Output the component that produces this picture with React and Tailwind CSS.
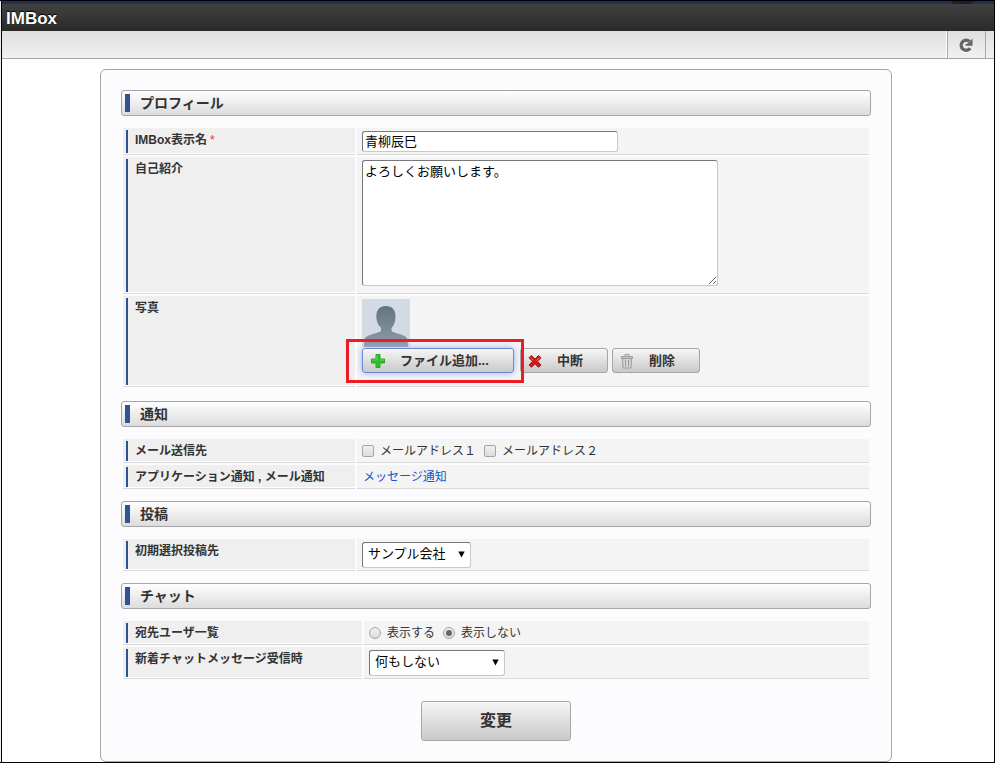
import React from 'react'

const Section = ({ title, className, children }) => (
  <section className={className}>
    <h2 className="flex items-center h-[26px] pl-[3px] border border-[#a6a6a6] rounded-[3px] bg-gradient-to-b from-white to-[#dcdcdc] text-sm font-bold text-[#333]">
      <span className="w-[5px] h-[18px] bg-[#2e5197] mr-2.5"></span>
      {title}
    </h2>
    <div className="mt-3 mx-0.5 flex flex-col gap-0.5">{children}</div>
  </section>
)

const Row = ({ label, htmlFor, required, wide, className, children }) => {
  const Tag = htmlFor ? 'label' : 'span'
  return (
    <div className={`grid gap-0.5 ${wide ? 'grid-cols-[239px_1fr]' : 'grid-cols-[232px_1fr]'} ${className}`}>
      <div className="bg-white border-b border-[#d9d9d9] pb-px flex">
        <div className="flex-1 flex bg-[#efefef] pl-[3px] pt-0.5">
          <Tag htmlFor={htmlFor} className="flex-1 border-l-2 border-[#2e5197] pl-[7px] leading-5 font-bold">
            {label}
            {required && <span className="text-[#f03030] font-normal ml-[3px]">*</span>}
          </Tag>
        </div>
      </div>
      <div className="bg-[#f4f4f4] border-b border-[#d9d9d9] pl-[5px] pt-[3px]">{children}</div>
    </div>
  )
}

const Select = ({ id, className, children }) => (
  <div className={`relative ${className}`}>
    <select id={id} className="appearance-none block w-full h-[26px] pl-[5px] pr-4 pb-0.5 bg-white text-[13px] text-black border border-[#c8c8c8] border-t-[#777] border-l-[#777] rounded-[3px]">
      {children}
    </select>
    <svg className="absolute right-[6px] top-[9px] pointer-events-none" width="7" height="7" viewBox="0 0 7 7">
      <path d="M0.3 0.5h6.4L3.5 6.5z" fill="#000" />
    </svg>
  </div>
)

const Check = ({ label }) => (
  <label className="flex items-center gap-1.5">
    <input type="checkbox" className="appearance-none w-3 h-3 border border-[#a5a5a5] rounded-[2px] bg-gradient-to-b from-[#f0f0f0] to-[#dcdcdc] checked:bg-[#2e5197]" />
    {label}
  </label>
)

const Radio = ({ label, checked }) => (
  <label className="flex items-center gap-1.5">
    <span className="relative flex w-3 h-3">
      <input type="radio" name="members" defaultChecked={checked} className="peer appearance-none w-3 h-3 border border-[#a5a5a5] rounded-full bg-gradient-to-b from-[#f0f0f0] to-[#dcdcdc]" />
      <span className="hidden peer-checked:block absolute inset-[3px] rounded-full bg-[#666] pointer-events-none"></span>
    </span>
    {label}
  </label>
)

const Avatar = () => (
  <svg className="block" width="48" height="48" viewBox="0 0 48 48">
    <defs>
      <linearGradient id="body" x1="0" y1="7" x2="0" y2="48" gradientUnits="userSpaceOnUse">
        <stop offset="0" stopColor="#61747f" />
        <stop offset="1" stopColor="#8f9da9" />
      </linearGradient>
    </defs>
    <rect width="48" height="48" fill="#d2dbe5" />
    <path d="M24 7C18 7 14.3 11 14.3 17.5c0 5 1.700 8.800 4.700 11.200v3.300c-1 1-3.500 1.700-7 2.700C6 36.300 3 37.500 2.500 41L2 48h44l-.5-7c-.5-3.500-3.500-4.700-9.500-6.300-3.500-1-5.500-1.700-6.500-2.700v-3.300c2.700-2.400 4-6.200 4-11.200C33.500 11 30 7 24 7z" fill="url(#body)" />
  </svg>
)

const PlusIcon = () => (
  <svg width="16" height="16" viewBox="0 0 16 16">
    <path d="M6 1.500h4V6h4.500v4H10v4.500H6V10H1.500V6H6z" fill="#2cbf2c" stroke="#28a52c" strokeLinejoin="round" />
    <path d="M7 2.500V7H2.500M10 7h4" fill="none" stroke="#5fdc5f" />
  </svg>
)

const CrossIcon = () => (
  <svg width="16" height="16" viewBox="0 0 16 16">
    <path d="M4.500 2.500L8 6l3.500-3.500 2.500 2.300L10.500 8.300 14 12l-2.500 2.300L8 10.800l-3.500 3.500L2 12l3.500-3.700L2 4.800z" fill="#c81e1e" stroke="#a81717" strokeLinejoin="round" />
    <path d="M3.500 4.500L6.500 7.500M12.500 4.500l-3 3" fill="none" stroke="#ee7272" />
  </svg>
)

const TrashIcon = () => (
  <svg width="16" height="16" viewBox="0 0 16 16" fill="none" stroke="#9a9a9e">
    <path d="M3.500 5.500h9l-.5 9.500H4z" fill="#d5d5d8" />
    <path d="M2.500 3.500h11v2h-11z" fill="#c9c9cd" />
    <path d="M6 3V1.500h4V3M6.500 7v6.500M9.500 7v6.500" />
  </svg>
)

const buttonBase = 'flex items-center h-[25px] border rounded-[3px] bg-gradient-to-b from-[#f6f6f6] to-[#c9c9c9] text-[13px] font-bold text-[#333]'

const App = () => {
  return (
    <div className="border-y border-r border-black pl-px bg-[#eee] font-['Liberation_Sans','Noto_Sans_CJK_JP',sans-serif] text-xs text-[#333]">
      <div className="border-l border-black bg-white">
        <header>
          <div className="relative h-[3px] bg-[#232f55] overflow-hidden">
            <span className="absolute right-5 -top-2 w-6 h-[11px] rounded-full bg-[#1c1f26]"></span>
          </div>
          <div className="h-[27px] flex items-center pl-1 pt-0.5 bg-gradient-to-b from-[#414141] to-[#2a2a2a]">
            <h1 className="text-[17px] leading-6 font-bold text-white [text-shadow:0_-1px_1px_#000]">IMBox</h1>
          </div>
          <div className="h-7 flex justify-end bg-gradient-to-b from-[#dfdfdf] to-[#f1f1f1] border-b border-[#a6a6a6]">
            <div className="border-l border-white mr-2 flex">
              <button type="button" aria-label="更新" className="w-[39px] flex items-center justify-center pr-0.5 border-x border-[#a6a6a6]">
                <svg width="16" height="16" viewBox="0 0 16 16">
                  <path d="M12.200 11.200A5 5 0 1 1 11.500 4.600" fill="none" stroke="#fff" strokeWidth="3.400" transform="translate(0 1)" />
                  <path d="M12.200 11.200A5 5 0 1 1 11.500 4.600" fill="none" stroke="#666" strokeWidth="3.400" />
                  <path d="M14.500 1.500v7.200H7.500V7.200l2.500-1z" fill="#666" />
                </svg>
              </button>
            </div>
          </div>
        </header>

        <main className="pt-2.5 pr-1">
          <form className="w-full max-w-[792px] mx-auto border border-[#a6a6a6] rounded-md bg-[#fcfcff] p-5" onSubmit={(e) => e.preventDefault()}>
            <Section title="プロフィール">
              <Row label="IMBox表示名" htmlFor="name" required className="h-[27px]">
                <input id="name" type="text" defaultValue="青柳辰巳" className="block w-64 h-[21px] px-0.5 pb-0.5 bg-white text-[13px] text-black border border-[#c8c8c8] border-t-[#777] border-l-[#777] rounded-[3px]" />
              </Row>
              <Row label="自己紹介" htmlFor="intro" className="h-[137px]">
                <textarea id="intro" defaultValue="よろしくお願いします。" className="block w-[356px] h-[126px] px-0.5 py-px leading-5 bg-white text-[13px] text-black border border-[#c8c8c8] border-t-[#777] border-l-[#777] rounded-[3px]" />
              </Row>
              <Row label="写真" className="h-[91px]">
                <Avatar />
                <div className="flex gap-1 mt-px">
                  <div className="relative mr-0.5">
                    <button type="button" className={`${buttonBase} w-[152px] pl-[7px] gap-[14px] border-[#6d87d6] shadow-[0_0_6px_#9db0ea]`}>
                      <PlusIcon />
                      ファイル追加...
                    </button>
                    {/* highlight frame around the add button */}
                    <span className="absolute -left-4 -right-2.5 -top-[9px] -bottom-2.5 border-[3px] border-[#ed1c24] pointer-events-none"></span>
                  </div>
                  <button type="button" className={`${buttonBase} w-[88px] pl-1.5 gap-[14px] border-[#a6a6a6]`}>
                    <CrossIcon />
                    中断
                  </button>
                  <button type="button" className={`${buttonBase} w-[88px] pl-1.5 gap-[14px] border-[#a6a6a6]`}>
                    <TrashIcon />
                    削除
                  </button>
                </div>
              </Row>
            </Section>

            <Section title="通知" className="mt-3.5">
              <Row label="メール送信先" className="h-6">
                <div className="flex items-center gap-2 h-[18px]">
                  <Check label="メールアドレス１" />
                  <Check label="メールアドレス２" />
                </div>
              </Row>
              <Row label="アプリケーション通知 , メール通知" className="h-6">
                <a href="#" className="block pl-px leading-[18px] text-[#1155cc]">メッセージ通知</a>
              </Row>
            </Section>

            <Section title="投稿" className="mt-3">
              <Row label="初期選択投稿先" htmlFor="dest" className="h-8">
                <Select id="dest" className="w-[109px]">
                  <option>サンプル会社</option>
                </Select>
              </Row>
            </Section>

            <Section title="チャット" className="mt-3">
              <Row label="宛先ユーザ一覧" wide className="h-6">
                <div className="flex items-center gap-2 h-[18px]">
                  <Radio label="表示する" />
                  <Radio label="表示しない" checked />
                </div>
              </Row>
              <Row label="新着チャットメッセージ受信時" htmlFor="receive" wide className="h-8">
                <Select id="receive" className="w-[136px]">
                  <option>何もしない</option>
                </Select>
              </Row>
            </Section>

            <button type="submit" className="block mt-[22px] mx-auto w-[150px] h-10 border border-[#a6a6a6] rounded-[3px] bg-gradient-to-b from-[#f6f6f6] to-[#c9c9c9] text-base font-bold text-[#333]">
              変更
            </button>
          </form>
        </main>
      </div>
    </div>
  )
}

export default App
